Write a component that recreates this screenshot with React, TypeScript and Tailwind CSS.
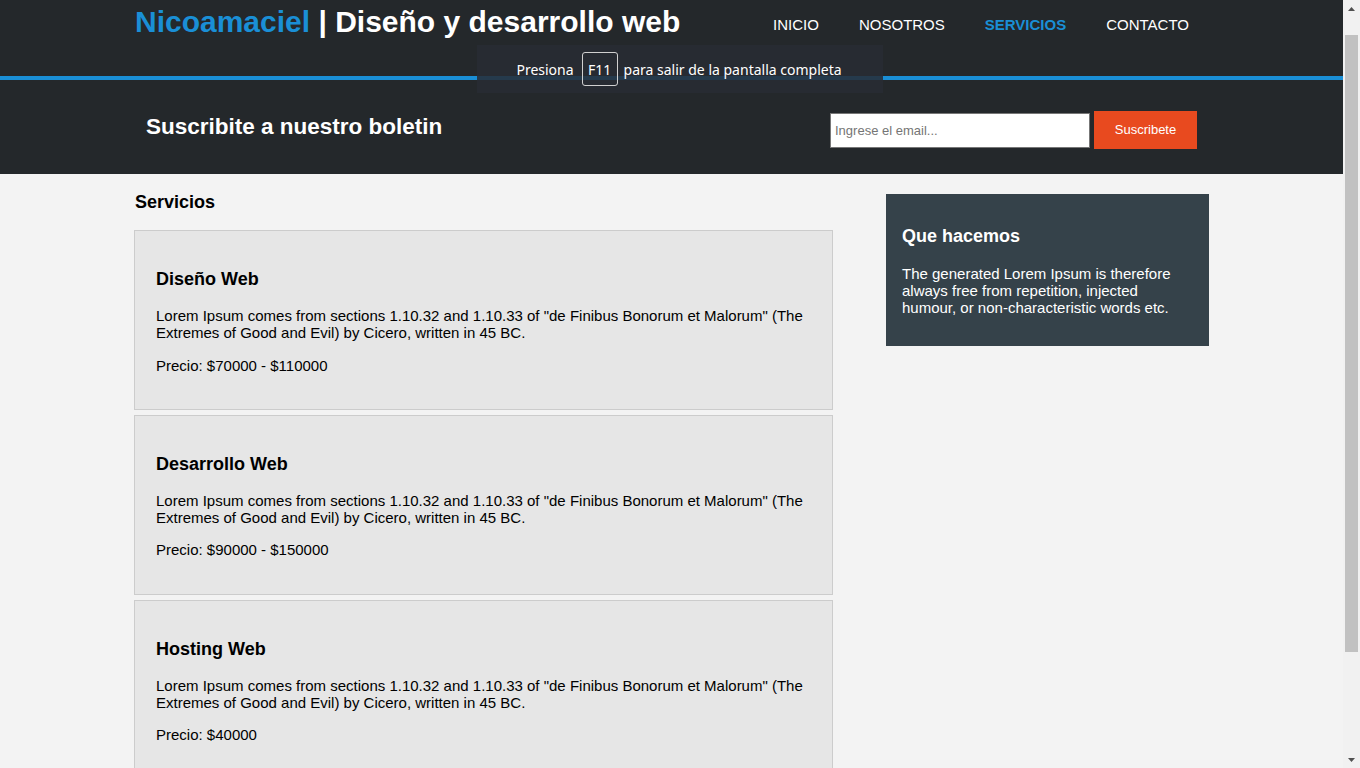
import React from "react";

const services = [
  { title: "Diseño Web", price: "Precio: $70000 - $110000" },
  { title: "Desarrollo Web", price: "Precio: $90000 - $150000" },
  { title: "Hosting Web", price: "Precio: $40000" },
];

const lorem =
  'Lorem Ipsum comes from sections 1.10.32 and 1.10.33 of "de Finibus Bonorum et Malorum" (The Extremes of Good and Evil) by Cicero, written in 45 BC.';

export default function App() {
  return (
    <div
      className="relative flex h-[768px] w-[1360px] overflow-hidden bg-[#f3f3f3] text-black"
      style={{ fontFamily: '"Liberation Sans", Arial, sans-serif' }}
    >
      <div className="flex-1 min-w-0 overflow-hidden">
        {/* Header */}
        <header className="h-[76px] bg-[#24282b]">
          <div className="ml-[134px] flex w-[1075px] items-start justify-between">
            <h1 className="ml-[1px] mt-[5px] text-[30px] font-bold leading-[34px] text-white">
              <span className="text-[#1a8fd6]">Nicoamaciel</span> | Diseño y desarrollo web
            </h1>
            <nav className="mt-[16px] flex text-[15px] uppercase leading-[17px] text-white">
              <a className="px-[20px]">Inicio</a>
              <a className="px-[20px]">Nosotros</a>
              <a className="px-[20px] font-bold text-[#1a8fd6]">Servicios</a>
              <a className="px-[20px]">Contacto</a>
            </nav>
          </div>
        </header>
        <div className="h-[4px] bg-[#1a8fd6]" />

        {/* Newsletter */}
        <section className="h-[94px] bg-[#24282b]">
          <div className="ml-[134px] flex h-full w-[1075px] items-center justify-between px-[12px]">
            <h2 className="-mt-[1px] text-[22.5px] font-bold text-white">Suscribite a nuestro boletin</h2>
            <form className="mt-[6px] flex items-center gap-[4px]" onSubmit={(e) => e.preventDefault()}>
              <input
                type="email"
                placeholder="Ingrese el email..."
                className="h-[35px] w-[260px] border border-[#777] bg-white px-[4px] text-[13px] text-black placeholder:text-[#757575] outline-none"
              />
              <button className="h-[38px] w-[103px] bg-[#e84a1f] text-[13px] text-white">Suscribete</button>
            </form>
          </div>
        </section>

        {/* Content */}
        <div className="ml-[134px] flex w-[1075px] justify-between">
          <main className="w-[699px] pt-[18px]">
            <h2 className="mb-[17px] ml-[1px] text-[18px] font-bold leading-[21px]">Servicios</h2>
            <div className="flex flex-col gap-[5px]">
              {services.map((s) => (
                <article key={s.title} className="border border-[#cccccc] bg-[#e6e6e6] px-[20px] py-[20px]">
                  <h3 className="my-[18px] ml-[1px] text-[18px] font-bold leading-[20px]">{s.title}</h3>
                  <p className="my-[15px] ml-[1px] text-[15px] leading-[17.25px]">{lorem}</p>
                  <p className="my-[15px] ml-[1px] text-[15px] leading-[17.25px]">{s.price}</p>
                </article>
              ))}
            </div>
          </main>
          <aside className="mt-[20px] h-fit w-[323px] bg-[#35424a] px-[16px] pt-[14px] pb-[15px] text-white">
            <h3 className="my-[18px] text-[18px] font-bold leading-[21px]">Que hacemos</h3>
            <p className="mt-[18px] mb-[15px] text-[15px] leading-[17px]">
              The generated Lorem Ipsum is therefore always free from repetition, injected humour, or non-characteristic words etc.
            </p>
          </aside>
        </div>
      </div>

      {/* Scrollbar */}
      <div className="flex w-[17px] shrink-0 flex-col items-center bg-[#f1f1f1]">
        <div className="flex h-[17px] w-full items-center justify-center">
          <svg width="7" height="4" viewBox="0 0 7 4">
            <path d="M3.5 0 L7 4 L0 4 Z" fill="#505050" />
          </svg>
        </div>
        <div className="mt-[18px] h-[617px] w-[13px] bg-[#c1c1c1]" />
        <div className="flex-1" />
        <div className="flex h-[17px] w-full items-center justify-center">
          <svg width="7" height="4" viewBox="0 0 7 4">
            <path d="M0 0 L7 0 L3.5 4 Z" fill="#505050" />
          </svg>
        </div>
      </div>

      {/* Fullscreen toast */}
      <div
        className="absolute left-[477px] top-[45px] flex h-[48px] w-[406px] items-center justify-center bg-[rgba(40,43,52,0.85)] pr-[2px] text-[14px] text-white"
        style={{ fontFamily: '"Noto Sans", "Open Sans", sans-serif' }}
      >
        <span>Presiona</span>
        <span className="ml-[8px] mr-[6px] flex h-[34px] w-[36px] items-center justify-center rounded-[3px] border border-[#d0d0d0]">F11</span>
        <span>para salir de la pantalla completa</span>
      </div>
    </div>
  );
}
